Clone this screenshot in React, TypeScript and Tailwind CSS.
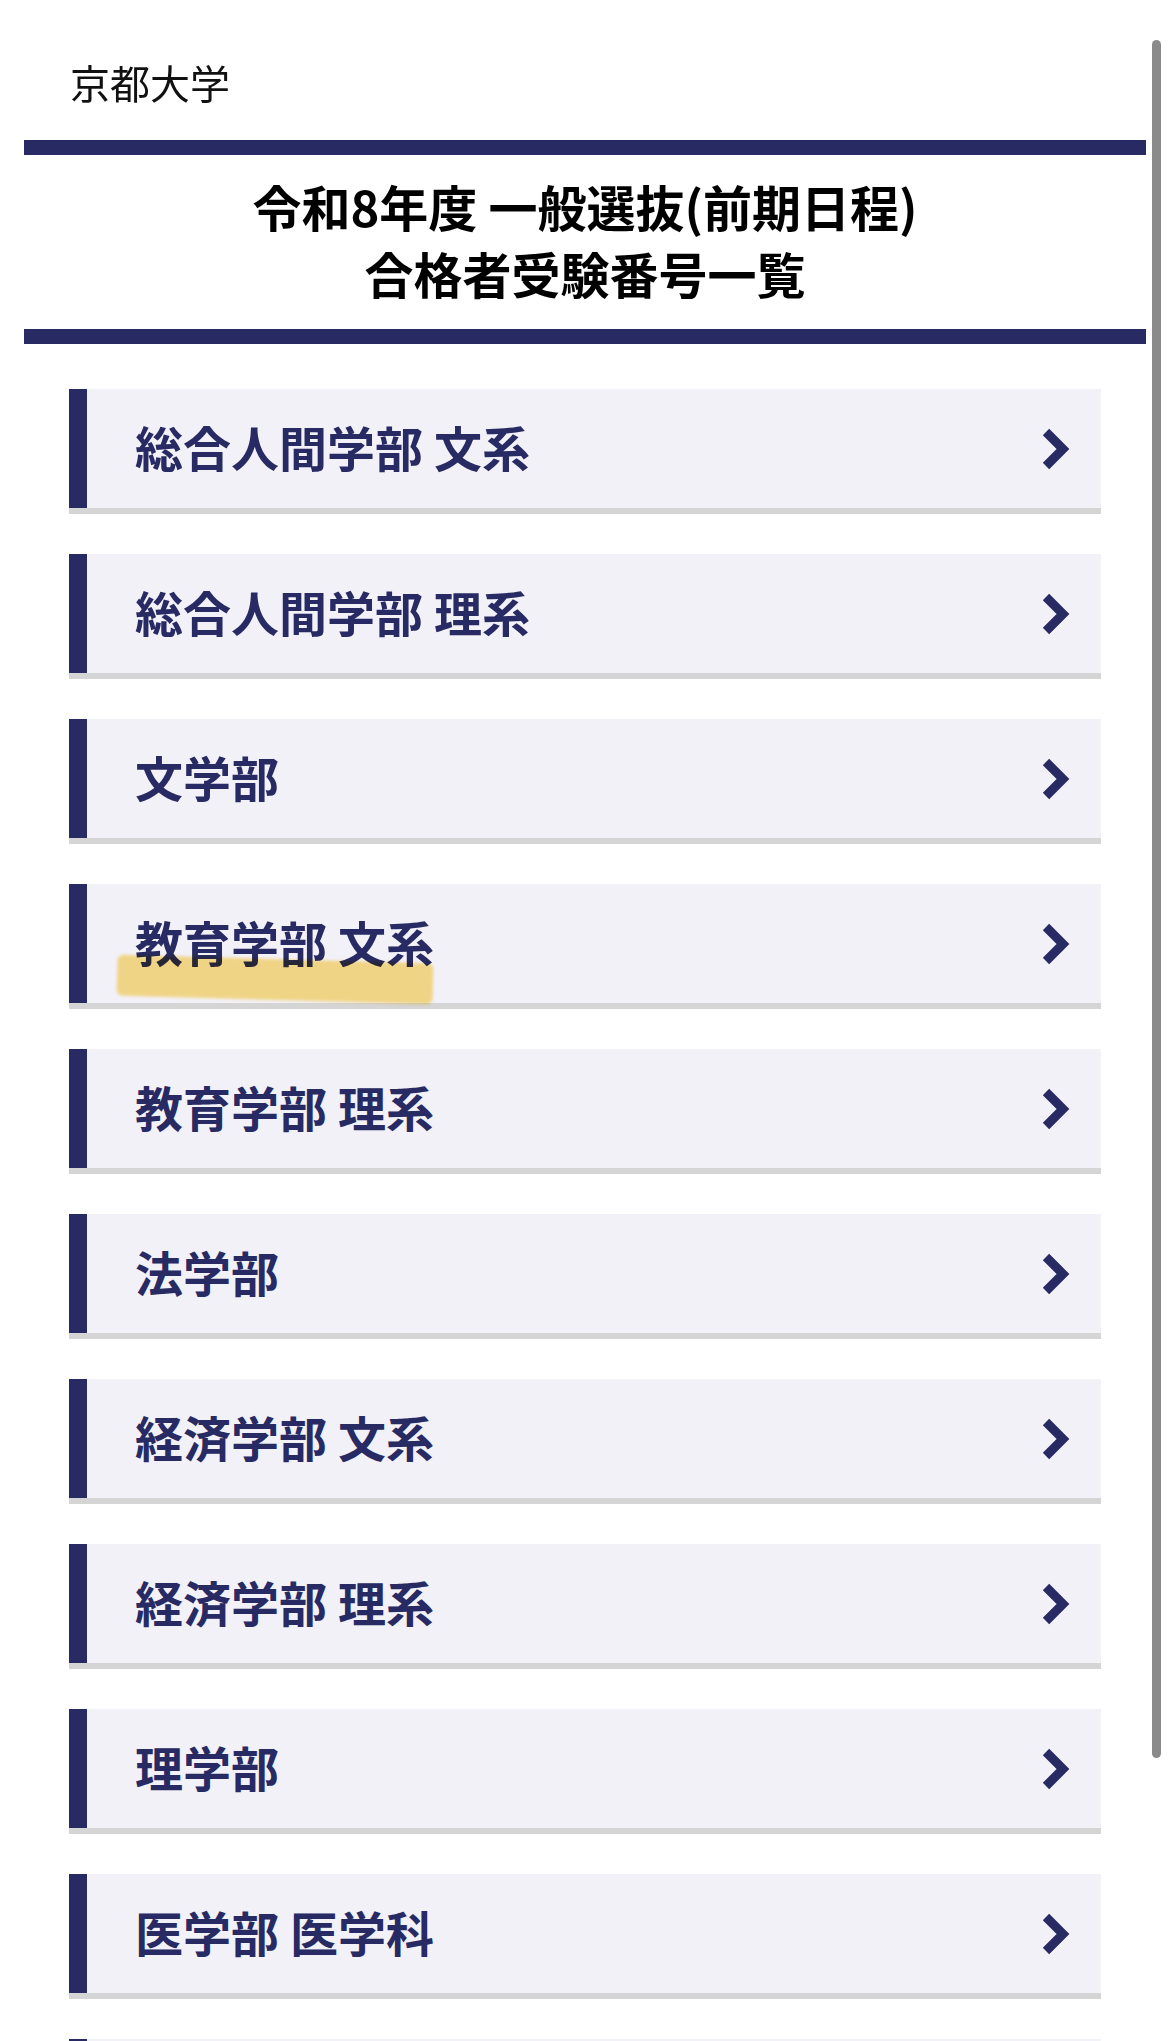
import React from "react";

const FACULTIES = [
  "総合人間学部 文系",
  "総合人間学部 理系",
  "文学部",
  "教育学部 文系",
  "教育学部 理系",
  "法学部",
  "経済学部 文系",
  "経済学部 理系",
  "理学部",
  "医学部 医学科",
  "医学部 人間健康科学科",
];

function Chevron() {
  return (
    <svg width="28" height="42" viewBox="0 0 28 42" className="shrink-0">
      <polyline
        points="4,4 21,21 4,38"
        fill="none"
        stroke="#272a63"
        strokeWidth="9"
        strokeLinejoin="miter"
        strokeLinecap="butt"
      />
    </svg>
  );
}

function FacultyRow({ name, marked }: { name: string; marked?: boolean }) {
  return (
    <div className="relative mb-[40px] border-b-[6px] border-[#d5d5d5]">
      <div className="flex h-[119px] items-center justify-between border-l-[18px] border-[#272a63] bg-[#f2f1f8] pl-[48px] pr-[31px]">
        <span className="pb-[6px] text-[48px] font-bold leading-none text-[#272a63]">{name}</span>
        <Chevron />
      </div>
      {/* 黄色いマーカー */}
      {marked && (
        <div className="pointer-events-none absolute left-[48px] top-[75px] h-[41px] w-[316px] rotate-[1.6deg] rounded-[6px] bg-[#fde18a] mix-blend-multiply blur-[1.5px]" />
      )}
    </div>
  );
}

export default function App() {
  return (
    <div
      className="relative h-[2041px] w-[1170px] overflow-hidden bg-white"
      style={{ fontFamily: '"Noto Sans CJK JP", "Noto Sans", sans-serif' }}
    >
      <div className="px-[24px]">
        {/* ヘッダー */}
        <div className="pl-[46px] pt-[52px] pb-[28px]">
          <p className="text-[40px] font-normal leading-[60px] text-[#111]">京都大学</p>
        </div>

        {/* タイトル */}
        <div className="h-[15px] bg-[#272a63]" />
        <h1 className="pt-[17px] pb-[23px] text-center text-[49px] font-bold leading-[67px] text-black">
          令和8年度 一般選抜(前期日程)
          <br />
          合格者受験番号一覧
        </h1>
        <div className="h-[15px] bg-[#272a63]" />

        {/* 学部一覧 */}
        <div className="px-[45px] pt-[45px]">
          {FACULTIES.map((f, i) => (
            <FacultyRow key={f} name={f} marked={i === 3} />
          ))}
        </div>
      </div>

      {/* スクロールバー */}
      <div className="absolute left-[1152px] top-[40px] h-[1718px] w-[9px] rounded-full bg-[#8a8a8a]" />
    </div>
  );
}
